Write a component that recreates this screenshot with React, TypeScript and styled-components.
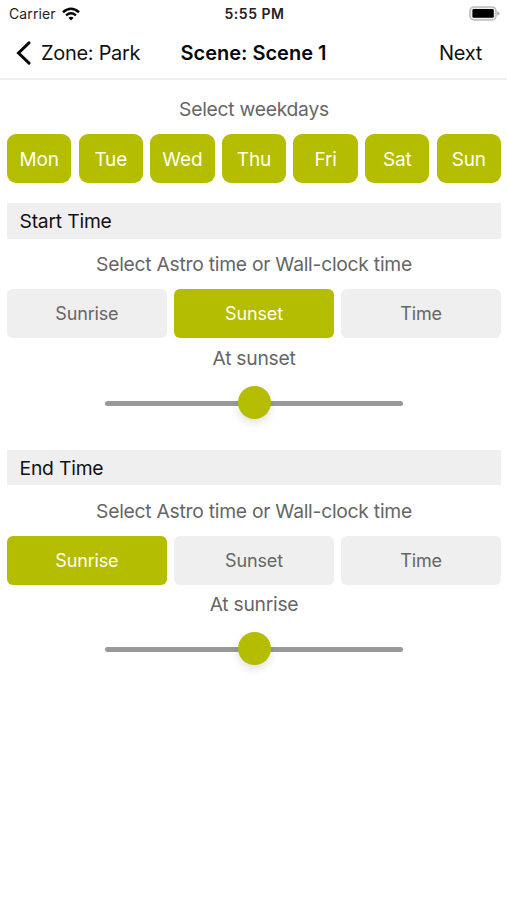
import React from "react";
import styled, { createGlobalStyle } from "styled-components";

const GREEN = "#b4bd00";

const GlobalStyle = createGlobalStyle`
  *, *::before, *::after { box-sizing: border-box; }
  body {
    margin: 0;
    background: #fff;
    font-family: Inter, "Liberation Sans", sans-serif;
    -webkit-font-smoothing: antialiased;
  }
  button { font-family: inherit; border: 0; padding: 0; background: none; }
`;

const Screen = styled.div`
  height: 900px;
  overflow: hidden;
  background: #fff;
`;

const Header = styled.header`
  height: 80px;
  border-bottom: 2px solid #efefef;
`;

const StatusBar = styled.div`
  display: grid;
  grid-template-columns: 1fr auto 1fr;
  align-items: center;
  height: 27px;
  padding: 0 7px 0 9px;
  color: #222;
`;

const Carrier = styled.div`
  display: flex;
  align-items: center;
  gap: 6px;
  font-size: 14px;
  letter-spacing: 0.1px;
`;

const Clock = styled.div`
  font-size: 14px;
  font-weight: 600;
  letter-spacing: 0.5px;
`;

const Battery = styled.svg`
  justify-self: end;
  display: block;
`;

const NavBar = styled.nav`
  display: grid;
  grid-template-columns: 1fr auto 1fr;
  align-items: center;
  height: 51px;
  padding: 0 16px;
  color: #111;
`;

const NavButton = styled.button<{ $end?: boolean }>`
  display: flex;
  align-items: center;
  gap: 10px;
  justify-self: ${(p) => (p.$end ? "end" : "start")};
  margin-right: ${(p) => (p.$end ? "9px" : "0")};
  color: #111;
  font-size: 20px;
  letter-spacing: -0.3px;
`;

const Title = styled.h1`
  margin: 0;
  font-size: 20px;
  font-weight: 600;
  letter-spacing: 0;
  color: #080808;
`;

const Content = styled.main`
  padding: 14px 6px 0 7px;
`;

const Caption = styled.p`
  margin: 0;
  height: 30px;
  line-height: 30px;
  text-align: center;
  font-size: 19.3px;
  letter-spacing: -0.26px;
  color: #666;
`;

const Days = styled.div`
  display: grid;
  grid-template-columns: repeat(7, 1fr);
  column-gap: 7.3px;
  margin-top: 10.4px;
`;

const Choices = styled.div`
  display: grid;
  grid-template-columns: repeat(3, 1fr);
  column-gap: 7.4px;
  margin-top: 10.4px;
`;

const Toggle = styled.button<{ $on: boolean; $radius: number; $size: number }>`
  height: 48.8px;
  border-radius: ${(p) => p.$radius}px;
  background: ${(p) => (p.$on ? GREEN : "#efefef")};
  color: ${(p) => (p.$on ? "#fffff0" : "#666")};
  font-size: ${(p) => p.$size}px;
  letter-spacing: -0.15px;
`;

const DayToggle = styled(Toggle)`
  padding-top: 1.4px;
`;

const Section = styled.section`
  height: 246.6px;
  padding-top: 19.8px;
`;

const SectionTitle = styled.h2`
  margin: 0 0 10.4px;
  height: 35.6px;
  padding: 1px 0 0 12.5px;
  line-height: 35.6px;
  background: #efefef;
  color: #111;
  font-size: 19.3px;
  font-weight: 400;
  letter-spacing: -0.2px;
`;

const Status = styled(Caption)`
  margin-top: 4.4px;
`;

const Slider = styled.div`
  display: grid;
  align-items: center;
  justify-items: center;
  width: 298px;
  height: 34px;
  margin: 12.6px auto 0;
`;

const Track = styled.div`
  grid-area: 1 / 1;
  width: 100%;
  height: 5px;
  margin-top: 2px;
  border-radius: 3px;
  background: #999;
`;

const Thumb = styled.div`
  grid-area: 1 / 1;
  width: 33px;
  height: 33px;
  border-radius: 50%;
  background: ${GREEN};
  box-shadow: 0 4px 9px rgba(0, 0, 0, 0.12);
`;

const days = ["Mon", "Tue", "Wed", "Thu", "Fri", "Sat", "Sun"];
const modes = ["Sunrise", "Sunset", "Time"];

function WifiIcon() {
  return (
    <svg width="18" height="14" viewBox="0 0 18 14" fill="none" stroke="#050505">
      <path d="M1 5.2Q9 -1.6 17 5.2" strokeWidth="2.5" />
      <path d="M4 8.4Q9 4.1 14 8.4" strokeWidth="2.3" />
      <path d="M6.4 10.8Q9 8.7 11.6 10.8L9 13.5Z" fill="#050505" stroke="none" />
    </svg>
  );
}

function BatteryIcon() {
  return (
    <Battery width="31" height="15" viewBox="0 0 31 15">
      <rect x="1" y="0.9" width="26" height="13" rx="4" fill="#eee" stroke="#bcbcbc" strokeWidth="1.5" />
      <rect x="3.4" y="3" width="21.4" height="8.8" rx="1.4" fill="#000" />
      <path d="M28.2 5.2Q30.5 6 30.5 7.4T28.2 9.6Z" fill="#aaa" />
    </Battery>
  );
}

function BackIcon() {
  return (
    <svg width="15" height="24" viewBox="0 0 15 24" fill="none" stroke="#080808" strokeWidth="3">
      <path d="M13 1.8L2.5 12L13 22.2" strokeLinejoin="miter" strokeLinecap="round" />
    </svg>
  );
}

function TimeSection({ title, selected, status }: { title: string; selected: string; status: string }) {
  return (
    <Section>
      <SectionTitle>{title}</SectionTitle>
      <Caption>Select Astro time or Wall-clock time</Caption>
      <Choices>
        {modes.map((mode) => (
          <Toggle key={mode} $on={mode === selected} $radius={6} $size={18}>
            {mode}
          </Toggle>
        ))}
      </Choices>
      <Status>{status}</Status>
      <Slider>
        <Track />
        <Thumb />
      </Slider>
    </Section>
  );
}

export default function App() {
  return (
    <Screen>
      <GlobalStyle />
      <Header>
        <StatusBar>
          <Carrier>
            Carrier
            <WifiIcon />
          </Carrier>
          <Clock>5:55 PM</Clock>
          <BatteryIcon />
        </StatusBar>
        <NavBar>
          <NavButton>
            <BackIcon />
            Zone: Park
          </NavButton>
          <Title>Scene: Scene 1</Title>
          <NavButton $end>Next</NavButton>
        </NavBar>
      </Header>
      <Content>
        <Caption>Select weekdays</Caption>
        <Days>
          {days.map((day) => (
            <DayToggle key={day} $on $radius={9} $size={19}>
              {day}
            </DayToggle>
          ))}
        </Days>
        <TimeSection title="Start Time" selected="Sunset" status="At sunset" />
        <TimeSection title="End Time" selected="Sunrise" status="At sunrise" />
      </Content>
    </Screen>
  );
}
